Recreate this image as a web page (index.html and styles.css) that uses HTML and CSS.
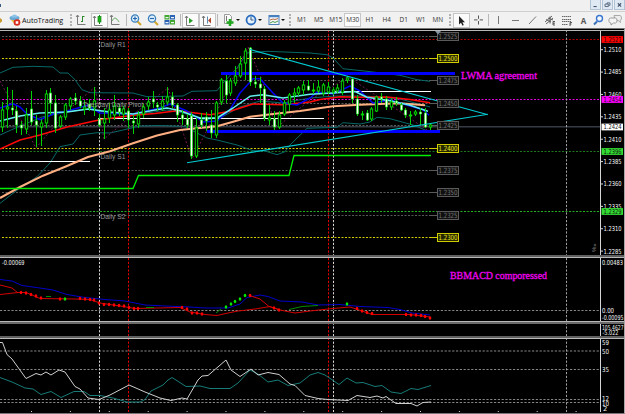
FILE: index.html
```html
<!DOCTYPE html>
<html lang="en">
<head>
  <meta charset="UTF-8" />
  <title>AutoTrading</title>
  <link rel="stylesheet" href="styles.css">
</head>
<body>
  <div class="titlebar">
    <span class="title-mark"></span>
    <div class="win-buttons">
      <svg class="win-btn" viewBox="0 0 11 10"><path d="M3 7.500h4" stroke="#46566f" stroke-width="1.3"/></svg>
      <svg class="win-btn" viewBox="0 0 11 10"><path d="M5 4.500v-1.500h3.500v3H7M2.500 4.500h4v3h-4z" fill="none" stroke="#46566f"/></svg>
      <svg class="win-btn" viewBox="0 0 11 10"><path d="M3.500 3.500l4 4M7.500 3.500l-4 4" stroke="#46566f" stroke-width="1.4"/></svg>
    </div>
  </div>

  <div class="toolbar">
    <div class="autotrading">
      <svg width="22" height="16" viewBox="0 0 22 16">
        <path d="M0 6l2 1.500v2l-2 1.500z" fill="#c99a32"/>
        <path d="M10 7l5 5 5-3-2-3z" fill="#e8b92e"/>
        <ellipse cx="14.500" cy="6" rx="5" ry="2.200" fill="#68a9d6"/>
        <path d="M11.500 5.500c0-4 6-4 6 0z" fill="#8cc4e8"/>
        <circle cx="17" cy="10.500" r="3.300" fill="#d92a1c"/>
        <rect x="15.700" y="9.200" width="2.600" height="2.600" fill="#fff"/>
      </svg>
      <span>AutoTrading</span>
    </div>
    <i class="grip"></i>
    <div class="tool"><svg viewBox="0 0 16 16"><path d="M3.500 3.500v9h8M2 5l1.500-2L5 5" class="axis"/><path d="M8.500 4v6M8.500 4.500h2M7 9.500h1.500" stroke="#2c8a2c" fill="none"/></svg></div>
    <div class="tool pressed"><svg viewBox="0 0 16 16"><path d="M3.500 3.500v9h8M2 5l1.500-2L5 5" class="axis"/><path d="M8.500 2v9" stroke="#168a16"/><rect x="7" y="3.500" width="3" height="5.500" fill="#19b219" stroke="#168a16" stroke-width=".7"/></svg></div>
    <div class="tool"><svg viewBox="0 0 16 16"><path d="M3.500 3.500v9h8M2 5l1.500-2L5 5" class="axis"/><path d="M4 9c2-4 4-4 7 1" stroke="#62a862" fill="none"/></svg></div>
    <i class="sep"></i>
    <div class="tool"><svg viewBox="0 0 16 16"><path d="M9.500 9.500l3.500 3.500" stroke="#d2a52c" stroke-width="2"/><circle cx="7" cy="6.500" r="3.600" fill="#e2f1fb" stroke="#3b80bd" stroke-width="1.300"/><path d="M5 6.500h4M7 4.500v4" stroke="#2368b0" stroke-width="1.200"/></svg></div>
    <div class="tool"><svg viewBox="0 0 16 16"><path d="M9.500 9.500l3.500 3.500" stroke="#d2a52c" stroke-width="2"/><circle cx="7" cy="6.500" r="3.600" fill="#e2f1fb" stroke="#3b80bd" stroke-width="1.300"/><path d="M5 6.500h4" stroke="#2368b0" stroke-width="1.200"/></svg></div>
    <div class="tool"><svg viewBox="0 0 16 16"><path d="M2.500 3h5v4.500h-5zM8 8h5v4.500h-5z" fill="#42a832"/><path d="M8 3h5v4.500H8zM2.500 8h5v4.500h-5z" fill="#2a63b4"/><path d="M3.500 5.700h3M9 5.700h3M3.500 10.700h3M9 10.700h3" stroke="#e9f4f2" stroke-width="1.300"/></svg></div>
    <i class="sep"></i>
    <div class="tool pressed"><svg viewBox="0 0 16 16"><path d="M4.500 3v9.500h8M3 5l1.500-2L6 5" class="axis"/><path d="M7 5l4 2.700L7 10.500z" fill="#27a127"/></svg></div>
    <div class="tool pressed"><svg viewBox="0 0 16 16"><path d="M4.500 3v9.500h7M3 5l1.500-2L6 5" class="axis"/><path d="M8.500 3.500v7" stroke="#5b8bb0"/><path d="M12 4.500v6L9 7.500z" fill="#b0492e"/></svg></div>
    <i class="sep"></i>
    <div class="drop"><svg viewBox="0 0 16 16"><path d="M4.500 2.500h5l2 2v7h-7z" fill="#fafafa" stroke="#888" stroke-width=".8"/><path d="M6.500 4v5" stroke="#777"/><path d="M6.500 10.500h7M10 7v7" stroke="#20a820" stroke-width="2.500"/></svg><b></b></div>
    <div class="drop"><svg viewBox="0 0 16 16"><circle cx="9" cy="8" r="4.500" fill="#e6f2fb" stroke="#2c6dbf" stroke-width="1.800"/><path d="M9 5v3h2.500" stroke="#33527b" fill="none"/></svg><b></b></div>
    <div class="drop"><svg viewBox="0 0 16 16"><rect x="4" y="3.500" width="10" height="9" fill="#f4f8fb" stroke="#4c7fb5"/><path d="M4 4.500h10" stroke="#4582c4" stroke-width="1.500"/><path d="M5 8l3-1 2 .5 3-1" stroke="#b96b42" fill="none"/><path d="M5 11l3-1.500 2 1 3-1.500" stroke="#4c9d4c" fill="none"/></svg><b></b></div>
    <i class="grip"></i>
    <div class="period">M1</div>
    <div class="period">M5</div>
    <div class="period">M15</div>
    <div class="period pressed">M30</div>
    <div class="period">H1</div>
    <div class="period">H4</div>
    <div class="period">D1</div>
    <div class="period">W1</div>
    <div class="period">MN</div>
    <i class="grip"></i>
    <div class="tool pressed"><svg viewBox="0 0 16 16"><path d="M5 3v8.500l2-1.800 1.500 3 1.300-.6-1.400-2.900h2.600z" fill="#222"/></svg></div>
    <div class="tool"><svg viewBox="0 0 16 16"><path d="M7.500 3.500v3.300M7.500 9v3.500M3 7.900h3.500M8.700 7.900H12" stroke="#555"/></svg></div>
    <i class="sep"></i>
    <div class="tool"><svg viewBox="0 0 16 16"><path d="M7.500 4v8" stroke="#777"/></svg></div>
    <div class="tool"><svg viewBox="0 0 16 16"><path d="M4 8.500h7" stroke="#777"/></svg></div>
    <div class="tool"><svg viewBox="0 0 16 16"><path d="M4 12l7-7.500" stroke="#777"/></svg></div>
    <div class="tool"><svg viewBox="0 0 16 16"><path d="M3 10l7-6M4 12l7-6M4 7.500l5 2.500M6 6l5 2M8 4.500v7" stroke="#555" fill="none" stroke-width=".9"/><path d="M13 9.500h-2v3.500h2M11 11.200h2" stroke="#333" fill="none" stroke-width=".8"/></svg></div>
    <div class="tool"><svg viewBox="0 0 16 16"><path d="M3 4.500h9M3 7.500h9M3 9.500h9M3 12.500h6" stroke="#666" stroke-dasharray="1.500 .5"/><path d="M11 14v-3.500h2M11 12h1.500" stroke="#333" fill="none" stroke-width=".8"/></svg></div>
    <div class="tool letter">A</div>
    <div class="tool slim"><svg viewBox="0 0 16 16"><path d="M6 9.500l-3 3" stroke="#386fb9" stroke-width="2"/><circle cx="8.500" cy="6.500" r="3" fill="#f2f8fd" stroke="#3875cf" stroke-width="1.400"/></svg></div>
    <div class="tool chat"><svg viewBox="0 0 16 16"><path d="M7 3.500h6c2 0 2 5 0 5l.5 2-2.500-2H8z" fill="#eee" stroke="#999" stroke-width=".8"/><path d="M3.500 6h5c2 0 2 5 0 5H6.500L4 13v-2c-3 0-2.500-5-.5-5z" fill="#f5f5f5" stroke="#888" stroke-width=".8"/></svg></div>
  </div>

  <div class="charts">
    <svg class="panel price" viewBox="0 31 624 224">
      <g id="levels"></g>
      <path class="slate" d="M0 126.800H600"/>
      <g class="verticals"></g>

      <g class="bands">
        <path d="M0 73L13 67.300 33 66.300 53 67 60 73 68 73 75 79.700 82 89.700 90 92.700 133 93 147 96.700 183 96 192 91.300 217 90.700 223 83 237 68 247 53 267 51.300 310 53 327 54.700 333 58 343 68.700 367 71.300 400 75.300 417 79.700 430 81.300"/>
        <path d="M0 203.300L20 188 37 176.700 50 163 60 146.700 73 144 80 135 97 132.700 110 133 120 130.700 140 126 160 125.500 185 126.500 197 133 207 138 217 140 237 145 253 150.700 265 151 277 154.700 285 151.700 290 145 307 128.300 337 127.300 343 122.700 360 124 370 122 377 117.300 390 118.700 413 125 430 132"/>
        <path d="M0 135L20 126 42 117 67 112 88 109 110 113 133 115 167 110 183 113 205 120 222 117 240 107 260 101 283 103 310 98 335 96 365 96 400 99 430 107"/>
      </g>
      <path class="zigzag" d="M0 81L20 118 36 148 66 112 95 87 104 139 135 113 168 88 192 159 220 105 248 47 262 80 276 128 310 100 348 77 380 98 430 132"/>

      <path class="blue-bar" d="M221 73.500H455"/>
      <path class="blue-bar" d="M207 131.500H440"/>

      <path class="white-line" d="M0 161.500H90M98 118.500H324M333 91.500H431"/>
      <path class="ma ma-peach" d="M0 198L20 187 43 175.700 67 166 88 157 110 151.300 133 143.300 157 135.500 180 130 217 126.300 234 121.500 250 116.700 273 114 300 111 333 106.300 360 104.700 400 103.300 425 105.300"/>
      <path class="ma ma-red" d="M0 149L20 140 40 135 67 127 100 119.700 133 115.300 155 113.500 177 110.700 210 114.700 230 111.300 253 104 283 104.700 310 102 320 99.500 340 96.700 360 97.300 387 97 410 99.500 430 102.700"/>
      <path class="ma ma-blue" d="M0 108L13 103.700 20 107 27 114 40 119.700 53 114 67 111 88 105.300 100 113 133 114 160 108 170 104 187 111 203 122 217 121 230 109.700 240 93 253 78.700 260 78.700 273 93 283 103 297 105 310 98 317 92 333 94 350 86 360 91 373 103 390 100 410 106 423 109.700 429 115.300"/>
      <path class="ma ma-cyan" d="M0 121L20 116 40 113 67 112 88 109 110 112 133 114 155 110 167 108 180 110.700 200 118 217 118 233 108 250 96.300 263 94.700 283 98 310 94.300 333 93 355 91.500 367 97.300 390 100.700 410 105.300 428 111.300"/>
      <path class="stops" d="M0 188.500H133L138.500 175.500H289L294 155.500H431"/>

      <g id="candles"></g>
      <path class="trend" d="M250 49.500L488 114.700M187 162.700L488 114.300"/>

      <g class="pivot-names">
        <text x="100.500" y="46.500">Daily R1</text>
        <text x="83" y="106.500" textLength="60">Tuesday| Daily Pivot</text>
        <text x="100.500" y="158.500">Daily S1</text>
        <text x="100.500" y="218.500">Daily S2</text>
      </g>
      <text class="note" x="461" y="78.500" textLength="76" lengthAdjust="spacingAndGlyphs">LWMA agreement</text>
      <g id="tags"></g>
      <path class="shift-mark" d="M435 31h6l-3 3.500z"/>
      <path class="axis-line" d="M600.500 31V255"/>
      <g id="prices"></g>
      <text class="side-mark" transform="translate(596 252) rotate(-90)">%»</text>
    </svg>

    <svg class="panel macd" viewBox="0 258 624 63">
      <path class="dots" d="M0 310.500H600"/>
      <g class="verticals"></g>
      <path class="m-blue" d="M0 279.500L12 281 22 285.500 40 288 53 290 67 294.500 85 297.500 105 299.500 125 301 145 305 165 306 190 307 205 308 228 308 240 304 247 297.500 260 295 268 296.500 280 301 302 302 318 305 340 304.500 360 306.500 388 307.500 400 309.500 412 313 430 315"/>
      <path class="m-red" d="M0 294.500L18 292.500 26 292.500 32 295 40 298.500 75 299 90 299.500 100 303 120 306 135 308.500 180 307.500 190 312 205 314.500 217 315.500 228 313 238 311 255 309 270 306.500 280 310 295 313 310 311 333 308.500 350 307 362 311 372 314.500 390 314.500 410 314.500 430 317"/>
      <path class="m-red" d="M0 285L12 288 18 293M251 296L260 299 269 306.500 280 310"/>
      <path class="m-green" d="M46 296.500h5M146 307.500h8M216 313l5-4M289 309.500l13-3 16-1"/>
      <g id="macd-dots"></g>
      <text class="value" x="2" y="265.300" textLength="22.500" lengthAdjust="spacingAndGlyphs">-0.00069</text>
      <text class="note" x="450" y="279" textLength="97" lengthAdjust="spacingAndGlyphs">BBMACD comporessed</text>
      <path class="axis-line" d="M600.500 258V321"/>
      <text class="scale" x="602" y="264.500" textLength="21" lengthAdjust="spacingAndGlyphs">0.00483</text>
      <text class="scale" x="602" y="313" textLength="12" lengthAdjust="spacingAndGlyphs">0.00</text>
      <text class="scale" x="602" y="319.800" textLength="21.500" lengthAdjust="spacingAndGlyphs">-0.00095</text>
    </svg>

    <svg class="panel slim-panel" viewBox="0 324 624 12">
      <g class="verticals"></g>
      <path class="axis-line" d="M600.500 324V336"/>
      <text class="scale" x="602" y="329.800" textLength="21.500" lengthAdjust="spacingAndGlyphs">105.4627</text>
      <text class="scale" x="602.500" y="335.300" textLength="16" lengthAdjust="spacingAndGlyphs">-5.022</text>
    </svg>

    <svg class="panel dmi" viewBox="0 339 624 73">
      <path class="dots dim" d="M0 351H600"/>
      <path class="dots" d="M0 369.500H600M0 399.500H600M0 402.500H600"/>
      <g class="verticals"></g>
      <path class="d-teal" d="M0 377.500L12 382 25 388 33 389 41 394.500 51 391.500 61 397.500 74 391.500 84 391.500 90 395.500 100 395.500 113 398 127 402 140 402 145 399.500 151 391 163 385 168 380 172 377.500 186 386.500 200 386 210 388.500 230 388.500 238 383 250 370 258 374 268 382 278 380 288 385.500 300 383 310 375 318 372.500 325 375 339 384.500 347 378 356 383 363 382.500 375 386.500 382 385.500 391 392 401 393.500 411 388.500 418 389.500 431 385.500"/>
      <path class="d-white" d="M0 342.500H2.500L7 354.500 12 359 26 378.500 36 373.500 41 375 46 372 51 375 59 370 65 372 75 386.500 80 389 88 398 99 399.500 110 395 129 385 145 392 160 398 171 400.500 182 398 187 399 198 380 202 376 208 375.500 226 360 231 370 240 376.500 251 369 258 375 268 372.500 279 374.500 290 384 295 385.500 305 395.500 318 398.500 328 399.500 348 400.500 357 395.500 370 397.500 377 396 383 398 386 396.500 396 403.500 411 403.500 417 406 423 402.500 431 402"/>
      <path class="axis-line" d="M600.500 339V412"/>
      <text class="scale" x="602" y="345" textLength="7" lengthAdjust="spacingAndGlyphs">59</text>
      <text class="scale" x="602" y="353.500" textLength="7" lengthAdjust="spacingAndGlyphs">50</text>
      <text class="scale" x="602" y="372" textLength="7" lengthAdjust="spacingAndGlyphs">35</text>
      <text class="scale" x="602" y="401.300" textLength="7" lengthAdjust="spacingAndGlyphs">12</text>
      <text class="scale" x="602" y="405.500" textLength="7" lengthAdjust="spacingAndGlyphs">10</text>
      <text class="scale" x="603" y="411">2</text>
    </svg>
  </div>

  <script src="chart.js"></script>
</body>
</html>
```

FILE: styles.css
```css
* { box-sizing: border-box; }
body {
  margin: 0;
  width: 625px;
  height: 414px;
  overflow: hidden;
  background: #000;
  font-family: "Open Sans", "Liberation Sans", sans-serif;
}
.titlebar {
  display: flex;
  justify-content: space-between;
  height: 12px;
  background: #f0f0f0;
  border-bottom: 1px solid #cfcfcf;
}
.title-mark {
  width: 1px;
  height: 3px;
  margin-top: 4px;
  background: #3a5a80;
}
.win-buttons { display: flex; }
.win-btn {
  width: 11px;
  height: 10px;
  margin-left: 1px;
  background: #dfe9f4;
  border: 1px solid #b3c3d6;
  border-top: 0;
}

/* toolbar */
.toolbar {
  display: flex;
  align-items: center;
  height: 16px;
  background: #f1f1f1;
}
.autotrading {
  display: flex;
  align-items: center;
  width: 67px;
  font-size: 7.2px;
  color: #111;
  white-space: nowrap;
}
.autotrading svg { flex: none; }
.toolbar svg { display: block; }
.grip {
  width: 2px;
  height: 12px;
  margin: 0 2px 0 3px;
  border-left: 2px dotted #b2b2b2;
}
.sep {
  width: 1px;
  height: 12px;
  margin: 0 1px;
  background: #b8b8b8;
}
.tool {
  display: flex;
  justify-content: center;
  width: 17px;
  height: 15px;
}
.tool svg, .drop svg {
  flex: none;
  width: 16px;
  height: 16px;
}
.tool svg { margin-top: -1px; }
.pressed {
  background: #fbfbfb;
  border: 1px solid #c6c6c6;
}
.axis {
  fill: none;
  stroke: #6c6c6c;
  stroke-width: .9;
}
.drop {
  display: flex;
  align-items: center;
  width: 22.5px;
}
.drop svg { margin-left: 1px; }
.drop b {
  border: 2px solid transparent;
  border-top-color: #111;
  border-bottom: 0;
}
.period {
  width: 17px;
  height: 14px;
  font-size: 6.4px;
  line-height: 14px;
  text-align: center;
  color: #333;
}
.period.pressed { line-height: 12px; }
.letter {
  font-size: 8px;
  font-weight: bold;
  line-height: 15px;
  color: #555;
}
.slim { width: 13px; }
.chat { width: 20px; }

/* chart windows */
.charts {
  height: 386px;
  border-top: 1px solid #777;
  border-right: 1px solid #a8a8a8;
  border-bottom: 1px solid #777;
  padding-top: 1px;
}
.panel {
  display: block;
  width: 624px;
  background: #000;
  border-top: 1px solid #b8b8b8;
}
.panel path { fill: none; }
.price { height: 225px; }
.macd {
  height: 64px;
  margin-top: 2px;
  box-shadow: 0 -2px #606060;
}
.slim-panel {
  height: 14px;
  margin-top: 1px;
  border-top: 2px solid #6a6a6a;
  box-shadow: 0 -1px #b8b8b8;
}
.dmi {
  height: 74px;
  margin-top: 2px;
  box-shadow: 0 -2px #606060;
}

.level { stroke-dasharray: 2 1.5; }
.slate { stroke: #343b44; stroke-width: 1.6; }
.v-white { stroke: #d8d8d8; stroke-dasharray: 2.2 1.6; }
.v-dim { stroke: #a0a0a0; stroke-dasharray: 2.2 1.6; }
.v-red { stroke: #e00000; stroke-dasharray: 2.2 1.6; }
.bands path { stroke: #086868; }
.zigzag { stroke: #741854; stroke-dasharray: 2 2; }
.blue-bar { stroke: #0000ff; stroke-width: 3.2; }
.white-line { stroke: #fff; stroke-width: 1.2; }
.ma { stroke-width: 1.5; stroke-linejoin: round; }
.ma-peach { stroke: #ffaf82; stroke-width: 2; }
.ma-red { stroke: #ff0808; }
.ma-blue { stroke: #0000f4; }
.ma-cyan { stroke: #63eeee; }
.stops { stroke: #00f000; stroke-width: 1.3; }
.trend { stroke: #00c9d0; stroke-width: 1.1; }
.wick { stroke: #00d000; }
.body { stroke: #00e400; stroke-width: .9; fill: #000; }
.body.down { fill: #fff; stroke-width: .6; }
.pivot-names {
  font: 6.7px "Liberation Sans", sans-serif;
  fill: #989898;
}
.note {
  font: 10px "Liberation Serif", serif;
  fill: #f000f0;
  stroke: #f000f0;
  stroke-width: .3;
}
.panel .shift-mark { fill: #8494a2; }
.axis-line { stroke: #d6d6d6; }
.scale, .value {
  font: 6.8px "DejaVu Sans", sans-serif;
  fill: #f4f4f4;
}
.scale.dark { fill: #111; }
.side-mark { font: 6px "Liberation Sans", sans-serif; fill: #888; }
.tag-text { font: 7.2px "DejaVu Sans", sans-serif; }
.dots { stroke: #858585; stroke-dasharray: 2.2 1.6; }
.dots.dim { stroke: #5c5c5c; stroke-width: 1.5; }
.m-blue { stroke: #0000c8; }
.m-red { stroke: #d40000; }
.m-green { stroke: #008c00; }
.d-teal { stroke: #177c78; }
.d-white { stroke: #cfcfcf; }
```

FILE: chart.js
```js
const NS = 'http://www.w3.org/2000/svg';

function add(parent, tag, attrs, text) {
  const el = document.createElementNS(NS, tag);
  for (const k in attrs) el.setAttribute(k, attrs[k]);
  if (text) el.textContent = text;
  parent.appendChild(el);
  return el;
}

// session separators, shared by every panel
document.querySelectorAll('.verticals').forEach(g => {
  [[99.5, 'white'], [128.5, 'red'], [328.5, 'red'], [333.5, 'white'], [566.5, 'dim']].forEach(([x, c]) => {
    add(g, 'path', { d: `M${x} 30V412`, class: 'v-' + c });
  });
});

// round number levels with boxed tags
const GRAY = '#5a5a5a', YELLOW = '#d0cc00';
const rounds = [
  [36.5, '1.2525', GRAY], [58.5, '1.2500', YELLOW], [80.5, '1.2475', GRAY],
  [103.5, '1.2450', GRAY], [125.5, '1.2425', GRAY], [148.5, '1.2400', YELLOW],
  [170.5, '1.2375', GRAY], [192.5, '1.2350', GRAY], [215.5, '1.2325', GRAY],
  [237.5, '1.2300', YELLOW]
];
const levels = document.getElementById('levels');
const tags = document.getElementById('tags');
rounds.forEach(([y, label, color]) => {
  add(levels, 'path', { d: `M2 ${y}H430`, class: 'level', stroke: color });
  add(levels, 'path', { d: `M430 ${y}H437`, stroke: color });
  add(tags, 'rect', { x: 437.5, y: y - 4, width: 21, height: 8, fill: color === GRAY ? '#101010' : '#252500', stroke: color });
  add(tags, 'text', { x: 438.5, y: y + 2.6, class: 'tag-text', fill: color === GRAY ? '#777' : '#eeea20', textLength: 19, lengthAdjust: 'spacingAndGlyphs' }, label);
});

// pivots and price marks across the full width
const marks = [
  [39.5, '1.2521', '#b00000', '#ff0000'], [99.5, '1.2454', '#e000e0', '#ff00ff'],
  [151.5, '1.2396', '#1c761c', '#32dc32'], [211.5, '1.2329', '#23b023', '#32dc32'],
  [127, '1.2424', null, '#ffffff']
];
const prices = document.getElementById('prices');
['1.2510', '1.2485', '1.2460', '1.2435', '1.2410', '1.2385', '1.2360', '1.2335', '1.2310', '1.2285'].forEach((p, i) => {
  const y = 49.7 + i * 22.38;
  add(prices, 'path', { d: `M600 ${y}h3`, class: 'axis-line' });
  add(prices, 'text', { x: 603.5, y: y + 2.4, class: 'scale', textLength: 18, lengthAdjust: 'spacingAndGlyphs' }, p);
});
marks.forEach(([y, label, line, fill]) => {
  if (line) add(levels, 'path', { d: `M2 ${y}H600`, class: 'level', stroke: line });
  add(prices, 'rect', { x: 601.5, y: y - 3.4, width: 21.5, height: 6.8, fill });
  add(prices, 'text', { x: 603.5, y: y + 2.4, class: 'scale dark', textLength: 18, lengthAdjust: 'spacingAndGlyphs' }, label);
});

// candles: high, body top, body bottom, low, 1 = bearish
const bars = [
  [102,110,127,132,0],[87,107,109,128,0],[90,108,110,115,1],[106,111,125,133,1],[121,125,128,135,1],
  [108,115,129,134,0],[91,109,122,125,1],[115,121,125,147,1],[119,123,127,146,0],[90,94,123,128,0],
  [88,93,103,115,1],[95,103,128,133,1],[115,117,126,128,0],[103,105,117,120,0],[97,99,106,110,0],
  [93,98,101,105,1],[96,101,106,108,1],[100,107,109,115,0],[99,104,108,111,1],[87,101,108,116,0],
  [114,119,125,127,1],[108,119,123,139,0],[103,110,118,123,0],[95,106,115,120,0],[104,108,112,116,1],
  [106,109,114,121,0],[108,111,120,128,1],[115,121,123,134,1],[111,115,124,128,0],[104,107,114,118,0],
  [97,102,106,110,0],[91,99,102,108,1],[102,105,107,111,1],[96,101,107,111,0],
  [87,97,102,105,0],[92,97,105,108,1],[103,105,115,122,1],[110,115,119,125,1],[114,119,125,128,1],
  [112,116,156,159,1],[118,128,156,158,0],[113,120,125,128,1],[112,117,121,131,1],[110,125,133,138,1],
  [101,103,135,138,0],[78,80,102,105,0],[75,81,95,103,1],[78,81,93,96,0],[66,76,83,86,0],
  [56,64,76,78,0],[48,51,63,80,0],[47,48,82,86,1],[76,82,84,88,1],[77,84,88,103,1],
  [86,89,118,121,1],[105,118,120,125,0],[111,119,127,130,1],[111,115,127,129,0],[100,103,114,116,0],
  [93,95,104,111,0],[88,93,95,103,0],[86,88,93,96,0],[81,85,90,95,0],[80,86,90,91,1],
  [83,90,91,94,0],[80,87,91,93,0],[83,85,93,96,0],
  [82,87,92,94,0],[87,90,92,95,0],[84,88,91,93,0],[78,81,92,95,0],[76,78,80,83,0],
  [77,79,99,103,1],[95,99,114,116,1],[111,114,115,120,0],[110,113,120,121,1],[107,109,119,121,0],
  [96,97,111,112,0],[93,97,99,103,1],[96,99,107,110,1],[98,102,107,110,0],[97,101,103,106,1],
  [103,105,110,111,1],[108,110,115,118,1],[111,115,116,125,0],[110,112,114,116,0],[108,112,114,125,1],
  [108,113,127,128,1],[123,125,127,130,0]
];
const step = (430.3 - 2.3) / (bars.length - 1);
const candles = document.getElementById('candles');
bars.forEach(([hi, top, bot, lo, down], i) => {
  // snap to the pixel grid so the wicks stay sharp
  const x = Math.floor(2.3 + i * step) + 0.5;
  add(candles, 'path', { d: `M${x} ${hi}V${lo}`, class: 'wick' });
  add(candles, 'rect', { x: x - 1.2, y: top, width: 2.4, height: bot - top, class: down ? 'body down' : 'body' });
});

// oscillator markers
const red = '#ff0000', green = '#00e800';
const dots = [
  [21,292.5,red],[26,293,red],[31,294.5,red],[36,296,red],[41,298,red],[60,299,red],[65,299,green],[80,298.5,red],
  [85,299,red],[90,299.5,red],[94,300,red],[99,303,red],[104,304.5,red],[109,304.5,red],[114,305,red],[119,305.5,red],
  [124,306,red],[129,307.5,red],[134,308.5,red],[138,308.5,red],[182,307.5,red],[187,309,red],[192,313,red],
  [197,313,red],[202,314,red],[226,307,green],[231,304,green],[235,301.5,green],[240,299,green],[245,295.5,green],
  [250,295.5,red],[274,308,red],[279,310,red],[347,304,green],[357,308.5,red],[362,311,red],[367,312.5,red],
  [372,313.5,red],[406,314.5,red],[411,315,red],[416,315,red],[421,315.5,red],[425,316.5,red],[430,318,red]
];
const macd = document.getElementById('macd-dots');
dots.forEach(([x, y, fill]) => add(macd, 'ellipse', { cx: x, cy: y, rx: 1.3, ry: 1.8, fill }));

// time ticks along the bottom edge
const dmi = document.querySelector('.dmi');
for (let x = 31.5; x < 600; x += 38.9) {
  add(dmi, 'path', { d: `M${x} 411v1`, class: 'axis-line' });
}
```
